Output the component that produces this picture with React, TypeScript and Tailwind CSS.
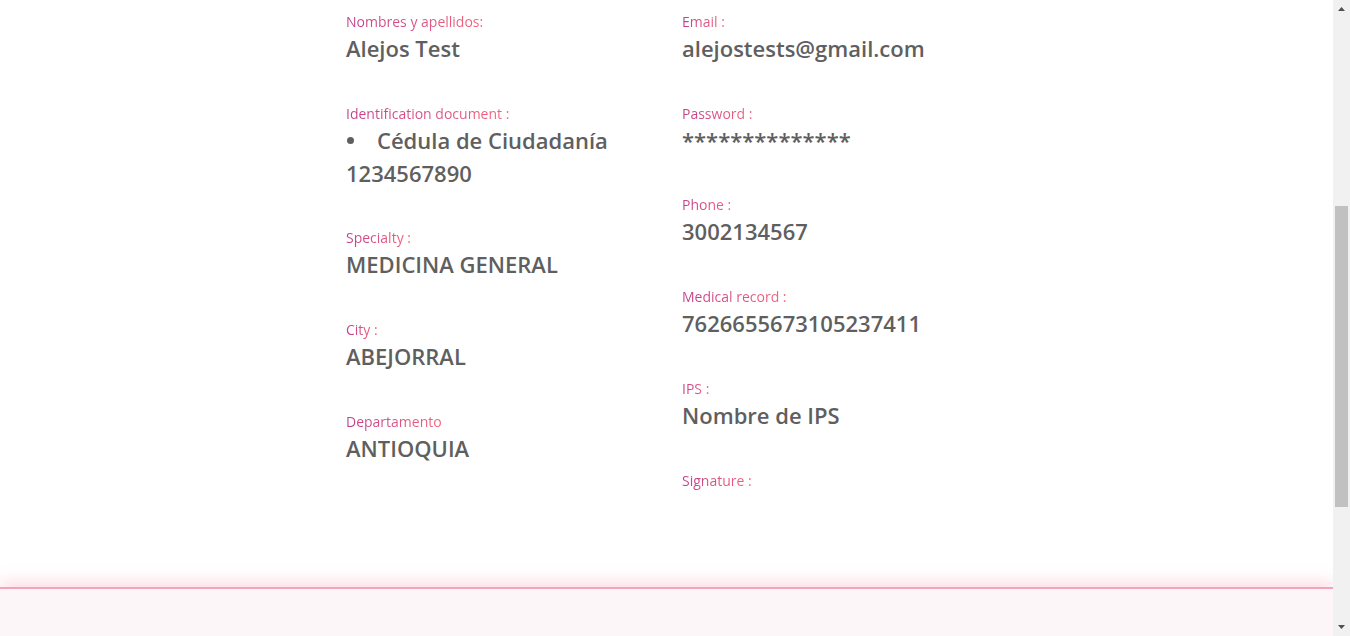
import React from "react";

const labelCls =
  "text-[14px] leading-[21px] bg-gradient-to-r from-[#c13f8b] to-[#f4647a] bg-clip-text text-transparent w-fit";
const valueCls = "text-[22px] leading-[33px] font-semibold text-[#5f5f5f]";

function Field({
  label,
  children,
  tight,
}: {
  label: string;
  children?: React.ReactNode;
  tight?: boolean;
}) {
  return (
    <div className={tight ? "flex flex-col mb-[37px]" : "flex flex-col mb-[38px]"}>
      <div className={labelCls}>{label}</div>
      {children}
    </div>
  );
}

export default function App() {
  return (
    <div
      className="flex w-[1350px] h-[636px] overflow-hidden bg-white"
      style={{ fontFamily: '"Open Sans", "Noto Sans", sans-serif' }}
    >
      <div className="flex flex-col flex-1 min-w-0">
        <div className="h-[587px] flex pl-[346px] pt-[11px]">
          <div className="w-[336px] flex flex-col">
            <Field label="Nombres y apellidos:">
              <div className={valueCls}>Alejos Test</div>
            </Field>
            <Field label="Identification document :" tight>
              <div className={`${valueCls} flex items-center`}>
                <span className="w-[7px] h-[7px] rounded-full bg-[#5f5f5f] ml-[1px] mr-[23px]" />
                <span>Cédula de Ciudadanía</span>
              </div>
              <div className={valueCls}>1234567890</div>
            </Field>
            <Field label="Specialty :">
              <div className={valueCls}>MEDICINA GENERAL</div>
            </Field>
            <Field label="City :">
              <div className={valueCls}>ABEJORRAL</div>
            </Field>
            <Field label="Departamento">
              <div className={valueCls}>ANTIOQUIA</div>
            </Field>
          </div>
          <div className="w-[336px] flex flex-col">
            <Field label="Email :">
              <div className={valueCls}>alejostests@gmail.com</div>
            </Field>
            <Field label="Password :" tight>
              <div className={valueCls}>**************</div>
            </Field>
            <Field label="Phone :">
              <div className={valueCls}>3002134567</div>
            </Field>
            <Field label="Medical record :">
              <div className={valueCls}>7626655673105237411</div>
            </Field>
            <Field label="IPS :">
              <div className={valueCls}>Nombre de IPS</div>
            </Field>
            <Field label="Signature :" />
          </div>
        </div>
        <div className="flex-1 bg-[#fdf6f9] border-t-2 border-[#f5a3bb] shadow-[0_-6px_14px_rgba(245,163,187,0.35)]" />
      </div>
      <div className="w-[17px] h-[636px] bg-[#f1f1f1] flex flex-col items-center relative">
        <svg width="17" height="17" viewBox="0 0 17 17" className="shrink-0">
          <path d="M5 11 L8.5 7 L12 11 Z" fill="#505050" />
        </svg>
        <div className="flex-1 w-full" />
        <svg width="17" height="17" viewBox="0 0 17 17" className="shrink-0">
          <path d="M5 6 L8.5 10 L12 6 Z" fill="#505050" />
        </svg>
        <div className="absolute left-[2px] top-[206px] w-[13px] h-[301px] bg-[#c1c1c1]" />
      </div>
    </div>
  );
}
